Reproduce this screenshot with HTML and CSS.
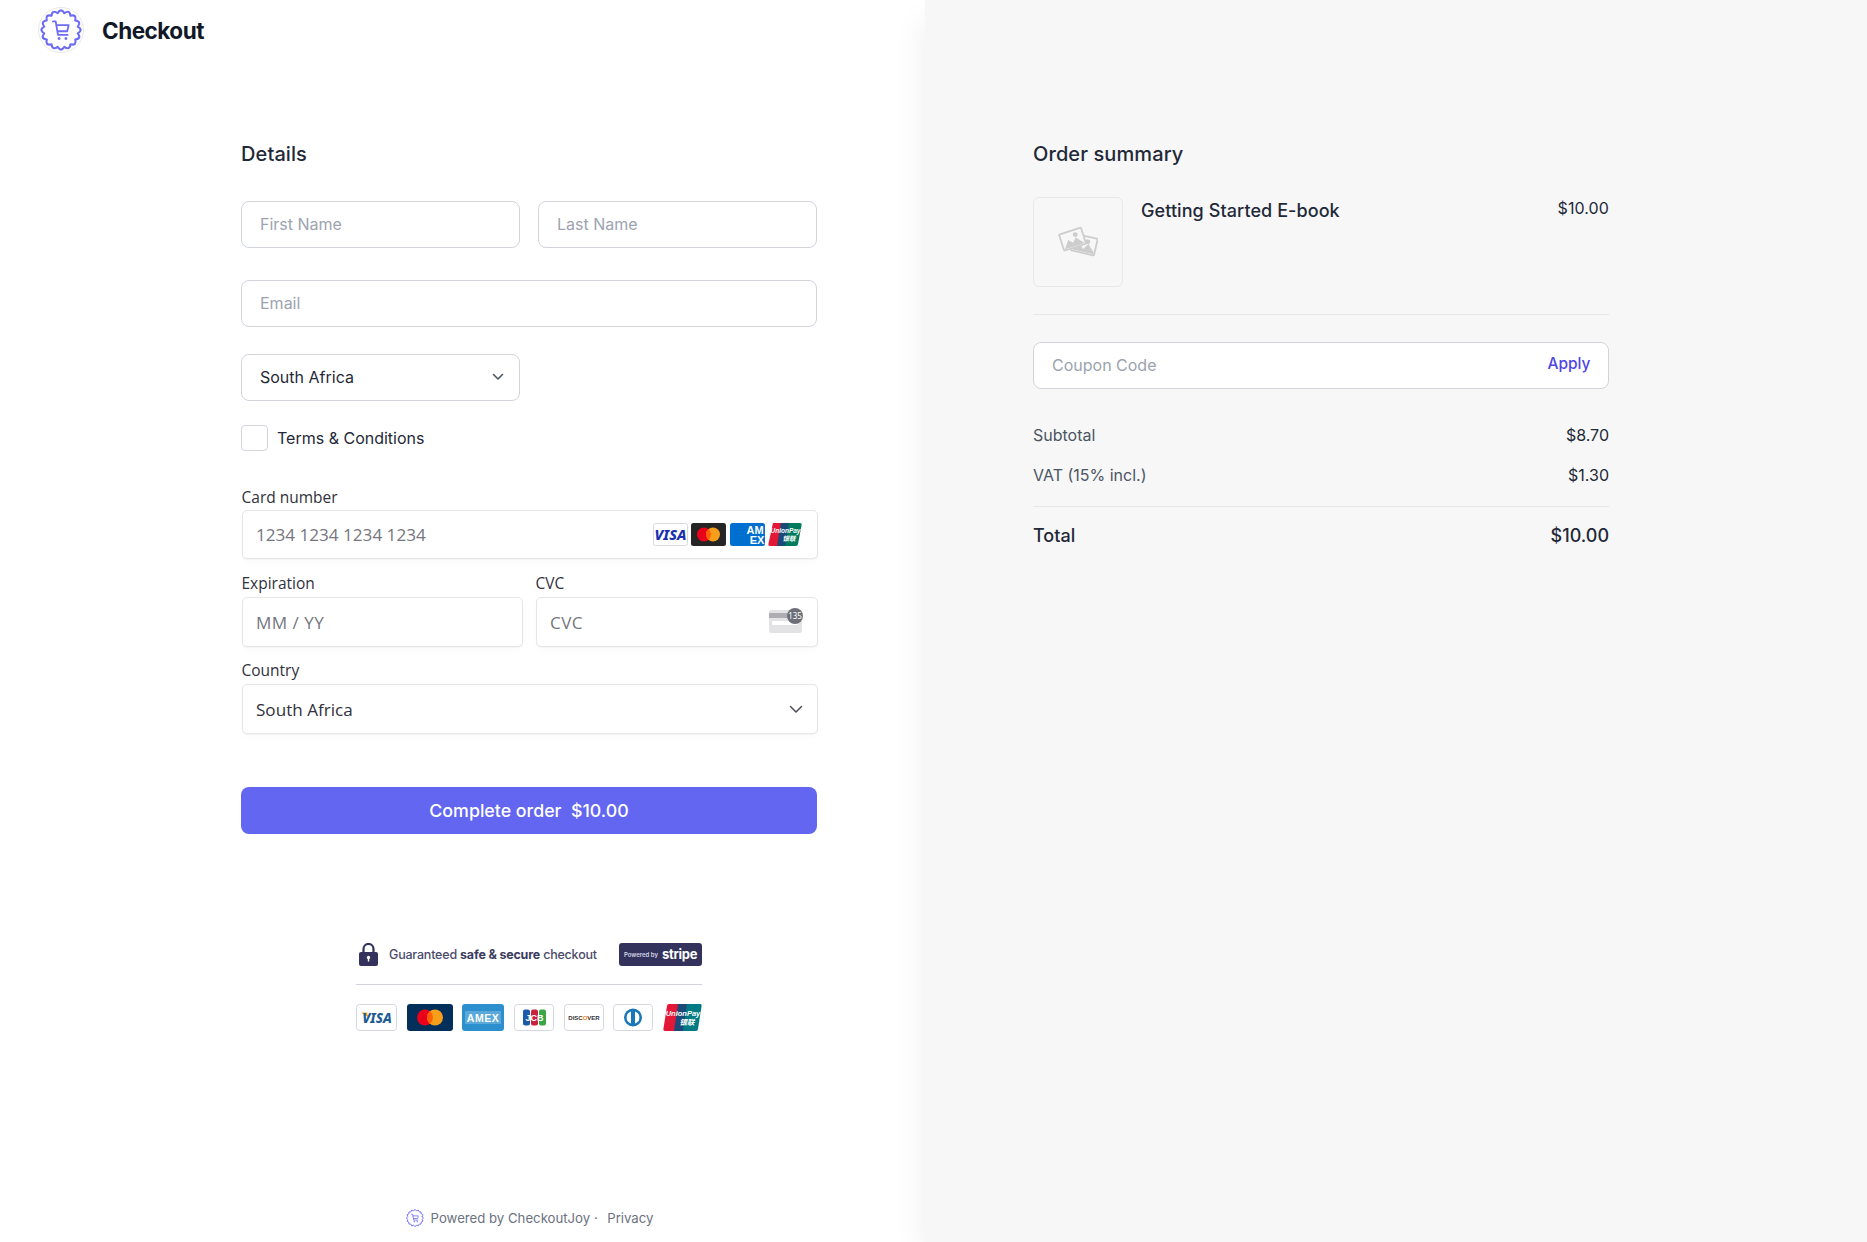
FILE: index.html
```html
<!DOCTYPE html>
<html lang="en">
<head>
<meta charset="utf-8">
<title>Checkout</title>
<link rel="stylesheet" href="styles.css">
</head>
<body>
<svg class="defs" width="0" height="0" aria-hidden="true">
  <symbol id="badge" viewBox="0 0 46 46">
    <g transform="translate(23 23) scale(1.07)" fill="none" stroke="#6e6bf5" stroke-width="2" stroke-linejoin="round" stroke-linecap="round">
      <path d="M15.69 -3.12Q21 0 15.69 3.12Q19.4 8.04 13.3 8.89Q14.85 14.85 8.89 13.3Q8.04 19.4 3.12 15.69Q0 21 -3.12 15.69Q-8.04 19.4 -8.89 13.3Q-14.85 14.85 -13.3 8.89Q-19.4 8.04 -15.69 3.12Q-21 0 -15.69 -3.12Q-19.4 -8.04 -13.3 -8.89Q-14.85 -14.85 -8.89 -13.3Q-8.04 -19.4 -3.12 -15.69Q0 -21 3.12 -15.69Q8.04 -19.4 8.89 -13.3Q14.85 -14.85 13.3 -8.89Q19.4 -8.04 15.69 -3.12Z"/>
      <path stroke-width="1.7" d="M-7.5 -8H-5L-2.800 4.600H6.200M-4.300 -4.600H7.200L5.800 1.200H-3.300"/>
      <circle cx="-1.800" cy="8" r=".8" stroke-width="1.200"/>
      <circle cx="4.600" cy="8" r=".8" stroke-width="1.200"/>
    </g>
  </symbol>
</svg>

<main class="page">
  <section class="checkout">
    <header class="brand">
      <span class="brand-logo"><svg width="46" height="46"><use href="#badge"/></svg></span>
      <span class="brand-name">Checkout</span>
    </header>

    <div class="column">
      <h2 class="heading">Details</h2>
      <div class="name-row">
        <input class="field" placeholder="First Name">
        <input class="field" placeholder="Last Name">
      </div>
      <input class="field email" placeholder="Email">
      <div class="name-row country-row">
        <div class="select-wrap">
          <select class="field select"><option>South Africa</option></select>
          <svg class="chevron" width="12" height="8" viewBox="0 0 12 8"><path d="M1.500 1.500 6 6l4.500-4.500" fill="none" stroke="#4b5563" stroke-width="1.600" stroke-linecap="round" stroke-linejoin="round"/></svg>
        </div>
      </div>
      <label class="terms"><span class="box"></span>Terms &amp; Conditions</label>

      <form class="stripe">
        <label class="s-label first">Card number</label>
        <div class="s-field s-card">
          <span class="s-ph">1234 1234 1234 1234</span>
          <span class="brands">
            <svg width="35" height="23" viewBox="0 0 35 23"><rect x=".5" y=".5" width="34" height="22" rx="2" fill="#fff" stroke="#d9d9de"/><text x="17.500" y="16.500" text-anchor="middle" class="t-visa">VISA</text></svg>
            <svg width="35" height="23" viewBox="0 0 35 23"><rect width="35" height="23" rx="2.500" fill="#252525"/><circle cx="13" cy="11.500" r="7" fill="#eb001b"/><circle cx="22" cy="11.500" r="7" fill="#f79e1b"/><path d="M17.500 6.100a7 7 0 0 1 0 10.800 7 7 0 0 1 0-10.800z" fill="#ff5f00"/></svg>
            <svg width="35" height="23" viewBox="0 0 35 23"><rect width="35" height="23" rx="2.500" fill="#016fd0"/><text x="25" y="11" text-anchor="middle" class="t-amex">AM</text><text x="27" y="20.500" text-anchor="middle" class="t-amex">EX</text></svg>
            <svg width="34" height="23" viewBox="0 0 34 23"><path d="M5 0h9L10 23H2Q0 23 .4 21z" fill="#e21836"/><path d="M13 0h9l-4 23H9z" fill="#1a4a7a"/><path d="M21 0h11q2 0 1.600 2L30 21q-.4 2-2 2H17z" fill="#007b5e"/><text x="17.500" y="10" text-anchor="middle" class="t-up">UnionPay</text><text x="21" y="18" text-anchor="middle" class="t-up">银联</text></svg>
          </span>
        </div>
        <div class="s-row">
          <div class="s-col">
            <label class="s-label">Expiration</label>
            <div class="s-field"><span class="s-ph s-wide">MM / YY</span></div>
          </div>
          <div class="s-col">
            <label class="s-label">CVC</label>
            <div class="s-field">
              <span class="s-ph s-wide">CVC</span>
              <svg class="cvc" width="35" height="25" viewBox="0 0 35 25"><rect x="0" y="2" width="33" height="23" rx="2" fill="#e3e3e6"/><rect y="5" width="33" height="5" fill="#aeaeb2"/><rect x="3" y="13" width="26" height="4" rx="1" fill="#fff"/><circle cx="26" cy="8" r="8" fill="#6d6e78"/><text x="26" y="10.700" text-anchor="middle" class="t-cvc">135</text></svg>
            </div>
          </div>
        </div>
        <label class="s-label s-last">Country</label>
        <div class="s-field">
          <span class="s-val">South Africa</span>
          <svg class="s-chev" width="14" height="9" viewBox="0 0 14 9"><path d="M1.500 1.500 7 7l5.500-5.500" fill="none" stroke="#4b4c57" stroke-width="1.500" stroke-linecap="round" stroke-linejoin="round"/></svg>
        </div>
      </form>

      <button class="submit" type="button">Complete order&nbsp; $10.00</button>

      <div class="trust">
        <div class="trust-top">
          <svg width="19" height="23" viewBox="0 0 19 23"><path d="M4.500 10V6a5 5 0 0 1 10 0v4" fill="none" stroke="#32325d" stroke-width="2.200"/><rect y="9" width="19" height="14" rx="2" fill="#32325d"/><circle cx="9.500" cy="14.500" r="1.700" fill="#fff"/><rect x="8.800" y="15" width="1.400" height="3.500" fill="#fff"/></svg>
          <span class="trust-text">Guaranteed <b>safe &amp; secure</b> checkout</span>
          <span class="stripe-badge"><small>Powered by</small><b>stripe</b></span>
        </div>
        <div class="trust-cards">
          <svg width="41" height="27" viewBox="0 0 41 27"><rect x=".5" y=".5" width="40" height="26" rx="3" fill="#fff" stroke="#d5d7df"/><path d="M5 8.500h6l1.500 5z" fill="#f5a623"/><text x="21" y="18.500" text-anchor="middle" class="t-visa2">VISA</text></svg>
          <svg width="46" height="27" viewBox="0 0 46 27"><rect width="46" height="27" rx="3" fill="#02305b"/><circle cx="18" cy="13.500" r="8" fill="#eb001b"/><circle cx="28" cy="13.500" r="8" fill="#f79e1b"/><path d="M23 7.300a8 8 0 0 1 0 12.400 8 8 0 0 1 0-12.400z" fill="#ff5f00"/></svg>
          <svg width="42" height="27" viewBox="0 0 42 27"><rect width="42" height="27" rx="3" fill="#2c8fce"/><rect x="3" y="7" width="36" height="13" fill="#5aa9da"/><text x="21" y="18" text-anchor="middle" class="t-amex2">AMEX</text></svg>
          <svg width="40" height="27" viewBox="0 0 40 27"><rect x=".5" y=".5" width="39" height="26" rx="3" fill="#fff" stroke="#d5d7df"/><rect x="9" y="5.500" width="7" height="16" rx="2" fill="#1b5aa6"/><rect x="17" y="5.500" width="7" height="16" rx="2" fill="#c8223f"/><rect x="25" y="5.500" width="7" height="16" rx="2" fill="#3aa648"/><text x="20.500" y="16.500" text-anchor="middle" class="t-jcb">JCB</text></svg>
          <svg width="40" height="27" viewBox="0 0 40 27"><rect x=".5" y=".5" width="39" height="26" rx="3" fill="#fff" stroke="#d5d7df"/><text x="20" y="15.500" text-anchor="middle" class="t-disc">DISC<tspan fill="#f58220">O</tspan>VER</text></svg>
          <svg width="40" height="27" viewBox="0 0 40 27"><rect x=".5" y=".5" width="39" height="26" rx="3" fill="#fff" stroke="#d5d7df"/><circle cx="20" cy="13.500" r="9" fill="#1976b8"/><path d="M18 7.500v12a6.300 6.300 0 0 1 0-12zM22 7.500a6.300 6.300 0 0 1 0 12z" fill="#fff"/></svg>
          <svg width="39" height="27" viewBox="0 0 39 27"><path d="M6 0h10l-4 27H2q-2 0-1.600-2L4 2q.3-2 2-2z" fill="#e21836"/><path d="M15 0h11l-4 27H11z" fill="#1a4a7a"/><path d="M24 0h13q2 0 1.600 2L35 25q-.3 2-2 2H20z" fill="#007b84"/><text x="20" y="11.500" text-anchor="middle" class="t-up2">UnionPay</text><text x="24" y="21" text-anchor="middle" class="t-up2">银联</text></svg>
        </div>
      </div>

      <footer class="foot">
        <svg width="20" height="20"><use href="#badge"/></svg>
        <span>Powered by CheckoutJoy ·</span>
        <a class="privacy">Privacy</a>
      </footer>
    </div>
  </section>

  <aside class="summary">
    <h2 class="heading">Order summary</h2>
    <div class="item">
      <div class="thumb">
        <svg width="40" height="32" viewBox="0 0 40 32">
          <g fill="none" stroke="#cdcdcd" stroke-width="1.800">
            <g transform="rotate(13 26 19)"><rect x="14" y="10" width="24" height="17" rx="1" fill="#f7f7f7"/><path d="M15 26l7-7 4 4 4-6 7 7v2H15z" fill="#cdcdcd" stroke="none"/><circle cx="29" cy="15" r="2.400" fill="#cdcdcd" stroke="none"/></g>
            <g transform="rotate(-18 15 13)"><rect x="3" y="4.500" width="23" height="17" rx="1" fill="#f7f7f7"/><path d="M4 20.500l6-8 4 4 4-4 7 8z" fill="#cdcdcd" stroke="none"/><circle cx="18.500" cy="9.500" r="2.400" fill="#cdcdcd" stroke="none"/></g>
          </g>
        </svg>
      </div>
      <div class="item-name">Getting Started E-book</div>
      <div class="item-price">$10.00</div>
    </div>
    <hr class="rule rule-item">
    <div class="coupon">
      <input class="coupon-input" placeholder="Coupon Code">
      <button class="apply" type="button">Apply</button>
    </div>
    <div class="line first-line"><span>Subtotal</span><span class="amount">$8.70</span></div>
    <div class="line"><span>VAT (15% incl.)</span><span class="amount">$1.30</span></div>
    <hr class="rule rule-total">
    <div class="total"><span>Total</span><span>$10.00</span></div>
  </aside>
</main>
</body>
</html>
```

FILE: styles.css
```css
* { box-sizing: border-box; }
html, body { margin: 0; height: 100%; }
body { font-family: Inter, "Liberation Sans", sans-serif; color: #111827; background: #fff; overflow: hidden; }
.defs { position: absolute; }

.page { display: flex; height: 1242px; }
.checkout { width: 925px; flex: none; display: flex; flex-direction: column; padding-top: 7px; background: #fff; }
.summary { flex: 1; background: #f7f7f7; padding: 140px 258px 0 108px; box-shadow: -10px 14px 30px -6px rgba(0,0,0,.06); position: relative; }

.brand { display: flex; align-items: center; height: 46px; padding-left: 38px; }
.brand-logo { width: 46px; height: 46px; border: 1px solid #e8e8e8; border-radius: 50%; display: flex; align-items: center; justify-content: center; flex: none; }
.brand-logo svg { margin: -1px; }
.brand-name { margin-left: 18px; font-size: 22.500px; font-weight: 700; letter-spacing: -.5px; color: #111827; }

.column { flex: 1; margin-left: 241px; width: 576px; display: flex; flex-direction: column; padding-top: 87px; }
.heading { margin: 0; font-size: 20px; line-height: 28px; font-weight: 450; letter-spacing: .1px; color: #1f2937; }
.name-row { display: grid; grid-template-columns: 279px 279px; column-gap: 18px; margin-top: 33px; }
.field { display: block; width: 100%; height: 47px; border: 1px solid #d1d5db; border-radius: 8px; background: #fff; padding: 0 18px 2px; font: 400 16px Inter, sans-serif; color: #1f2937; outline: none; }
.field::placeholder { color: #9ca3af; opacity: 1; }
.email { margin-top: 32px; }
.country-row { margin-top: 27px; }
.select-wrap { position: relative; }
.select { appearance: none; -webkit-appearance: none; }
.chevron { position: absolute; right: 16px; top: 19px; }
.terms { display: flex; align-items: center; margin-top: 24px; font-size: 16px; font-weight: 400; color: #1f2937; height: 26px; }
.box { width: 27px; height: 26px; border: 1px solid #d1d5db; border-radius: 4px; margin-right: 9px; background: #fff; }

.stripe { display: flex; flex-direction: column; margin: 33px -1px 0 1px; font-family: "Open Sans", "Noto Sans", sans-serif; }
.s-label { display: block; margin: 12px 0 2px -.5px; line-height: 24px; height: 24px; font-size: 15.500px; color: #30313d; }
.s-label.first { margin-top: 1px; margin-bottom: 1px; }
.s-label.s-last { margin-top: 11px; }
.s-field { display: flex; align-items: center; justify-content: space-between; height: 50px; background: #fff; border: 1px solid #e6e6e6; border-radius: 5px; padding: 0 14px 0 13px; box-shadow: 0 1px 1px rgba(0,0,0,.03), 0 3px 6px rgba(0,0,0,.02); font-size: 17.100px; }
.s-card { height: 49px; padding-right: 15px; }
.s-ph { color: #757680; }
.s-wide { letter-spacing: .45px; }
.s-val { color: #30313d; }
.brands { display: flex; gap: 3.500px; }
.s-row { display: grid; grid-template-columns: 281px 282px; column-gap: 13px; }
.cvc { margin-right: -1px; margin-top: -3px; }

.t-visa { font: italic 800 14.500px "Noto Sans", sans-serif; fill: #1a2fb0; }
.t-amex { font: 700 11px "Liberation Sans", sans-serif; fill: #fff; }
.t-up { font: italic 700 6.500px "Liberation Sans", "Noto Sans CJK SC", sans-serif; fill: #fff; }
.t-cvc { font: 400 8px "Noto Sans", sans-serif; fill: #fff; }
.t-visa2 { font: italic 800 13.500px "Noto Sans", sans-serif; fill: #1d5b94; }
.t-amex2 { font: 800 10.500px "Liberation Sans", sans-serif; letter-spacing: .5px; fill: #fff; }
.t-jcb { font: 700 9px "Liberation Sans", sans-serif; fill: #fff; }
.t-disc { font: 700 6px "Liberation Sans", sans-serif; fill: #333; }
.t-up2 { font: italic 700 7.500px "Liberation Sans", "Noto Sans CJK SC", sans-serif; fill: #fff; }

.submit { display: block; width: 100%; height: 47px; margin-top: 53px; border: 0; border-radius: 8px; background: #6366f1; color: #fff; font: 450 17.800px Inter, sans-serif; }

.trust { width: 346px; margin: 109px auto 0; }
.trust-top { display: flex; align-items: center; height: 23px; padding-left: 3px; }
.trust-text { margin-left: 11px; font-size: 12.500px; font-weight: 500; letter-spacing: -.2px; color: #4a4b6a; flex: 1; }
.trust-text b { font-weight: 700; color: #3b3c60; }
.stripe-badge { width: 83px; height: 23px; display: flex; align-items: center; justify-content: center; gap: 4px; padding-bottom: 1px; background: #32325d; color: #fff; border-radius: 3px; }
.stripe-badge small { font-size: 6px; font-weight: 600; color: #d5d6e4; white-space: nowrap; }
.stripe-badge b { font-size: 13px; font-weight: 700; letter-spacing: -.3px; }
.trust-cards { display: flex; justify-content: space-between; margin-top: 18px; padding-top: 19px; border-top: 1px solid #d1d2de; }

.foot { display: flex; align-items: center; justify-content: center; margin-top: auto; margin-bottom: 14px; font-size: 13.200px; color: #6b7280; gap: 6px; height: 20px; }
.privacy { margin-left: 3.500px; }

.item { display: flex; align-items: flex-start; margin-top: 29px; }
.thumb { width: 90px; height: 90px; flex: none; border: 1px solid #e8e8e8; border-radius: 6px; display: flex; align-items: center; justify-content: center; }
.item-name { margin-left: 18px; flex: 1; font-size: 18px; line-height: 28px; font-weight: 450; letter-spacing: .08px; color: #1f2937; }
.item-price { font-size: 16px; line-height: 22px; letter-spacing: .1px; color: #1f2937; }

.rule { border: 0; height: 1px; margin: 0; background: #e5e7eb; }
.rule-item { margin-top: 27px; }
.coupon { display: flex; align-items: center; height: 47px; margin-top: 27px; background: #fff; border: 1px solid #d1d5db; border-radius: 8px; padding: 0 17.500px 0 18px; }
.coupon-input { flex: 1; border: 0; outline: 0; padding: 0 0 2px; background: transparent; font: 400 16px Inter, sans-serif; }
.coupon-input::placeholder { color: #9ca3af; opacity: 1; }
.apply { border: 0; background: none; padding: 0 0 4px; font: 500 15.500px Inter, sans-serif; color: #4f46e5; }

.line { display: flex; justify-content: space-between; font-size: 16px; line-height: 24px; color: #4b5563; margin-top: 16px; }
.first-line { margin-top: 34px; }
.amount { color: #1f2937; }
.rule-total { margin-top: 19px; }
.total { display: flex; justify-content: space-between; margin-top: 15px; font-size: 18px; line-height: 28px; font-weight: 450; color: #1f2937; }
```
